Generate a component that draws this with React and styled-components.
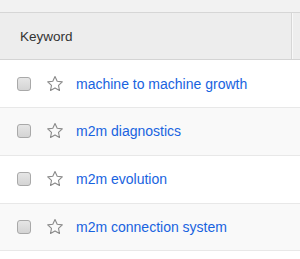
import styled, { createGlobalStyle } from "styled-components";

const keywords = [
  "machine to machine growth",
  "m2m diagnostics",
  "m2m evolution",
  "m2m connection system",
];

export default function App() {
  return (
    <>
      <GlobalStyle />
      <Page>
        <TopStrip />
        <Table>
          <HeaderRow>
            <HeaderCell>Keyword</HeaderCell>
            <HeaderRest />
          </HeaderRow>
          {keywords.map((k, i) => (
            <Row key={k} $striped={i % 2 === 1}>
              <Check />
              <Star viewBox="0 0 18 18">
                <path
                  d="M9 1.6l2.2 4.7 5.1.6-3.8 3.5 1 5.1L9 12.9l-4.5 2.6 1-5.1L1.7 6.9l5.1-.6z"
                  fill="none"
                  stroke="#8a8a8a"
                  strokeWidth="1.1"
                  strokeLinejoin="round"
                />
              </Star>
              <Link href="#">{k}</Link>
            </Row>
          ))}
        </Table>
      </Page>
    </>
  );
}

const GlobalStyle = createGlobalStyle`
  body {
    margin: 0;
    background: #fff;
    font-family: "Liberation Sans", Arial, sans-serif;
  }
`;

const Page = styled.div`
  width: 300px;
  height: 259px;
  overflow: hidden;
  background: #fff;
`;

const TopStrip = styled.div`
  height: 12px;
  background: #f2f2f2;
  border-bottom: 1px solid #d6d6d6;
`;

const Table = styled.div`
  display: flex;
  flex-direction: column;
`;

const HeaderRow = styled.div`
  display: flex;
  height: 46px;
  background: #ededed;
  border-bottom: 1px solid #d4d4d4;
`;

const HeaderCell = styled.div`
  width: 292px;
  display: flex;
  align-items: center;
  padding-left: 20px;
  box-sizing: border-box;
  font-size: 13.5px;
  color: #333;
  border-right: 1px solid #d6d6d6;
  box-shadow: 1px 0 0 #f8f8f8;
`;

const HeaderRest = styled.div`
  flex: 1;
`;

const Row = styled.div`
  display: flex;
  align-items: center;
  height: 47px;
  padding-left: 17px;
  background: ${(p) => (p.$striped ? "#f9f9f9" : "#fff")};
  border-bottom: 1px solid #e8e8e8;
  &:nth-of-type(odd) {
    height: 46.5px;
  }
`;

const Check = styled.span`
  width: 12px;
  height: 12px;
  border: 1px solid #a9a9a9;
  border-radius: 3px;
  background: linear-gradient(#e6e6e6, #d4d4d4);
  box-sizing: content-box;
`;

const Star = styled.svg`
  width: 18px;
  height: 18px;
  margin-left: 15px;
`;

const Link = styled.a`
  margin-left: 12px;
  font-size: 14px;
  color: #1863e0;
  text-decoration: none;
`;
